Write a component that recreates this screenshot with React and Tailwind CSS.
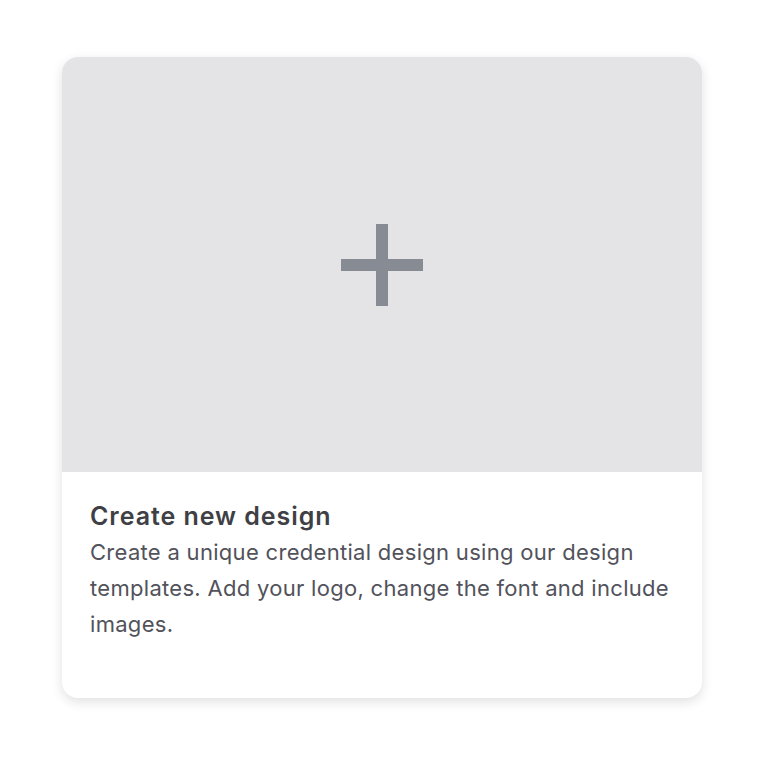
import React from 'react';

export default function App() {
    return (
        <div className="min-h-screen bg-white flex justify-center pt-[57px]" style={{ fontFamily: 'Inter, "Noto Sans", sans-serif' }}>
            <div className="w-[640px] h-[641px] rounded-2xl bg-white overflow-hidden shadow-[0_4px_12px_rgba(0,0,0,0.12)] flex flex-col">
                <div className="h-[415px] bg-[#e4e4e7] flex items-center justify-center">
                    <svg width="82" height="82" viewBox="0 0 82 82">
                        <rect x="35" y="0" width="12" height="82" fill="#878b94" />
                        <rect x="0" y="35" width="82" height="12" fill="#878b94" />
                    </svg>
                </div>
                <div className="px-7 pt-[28px]">
                    <h2 className="text-[25px] leading-8 font-semibold tracking-[0.95px] text-[#3f3f46]">Create new design</h2>
                    <p className="mt-[2px] text-[22px] leading-9 tracking-[0.3px] text-[#52525b]">
                        Create a unique credential design using our design templates. Add your logo, change the font and include images.
                    </p>
                </div>
            </div>
        </div>
    );
}
